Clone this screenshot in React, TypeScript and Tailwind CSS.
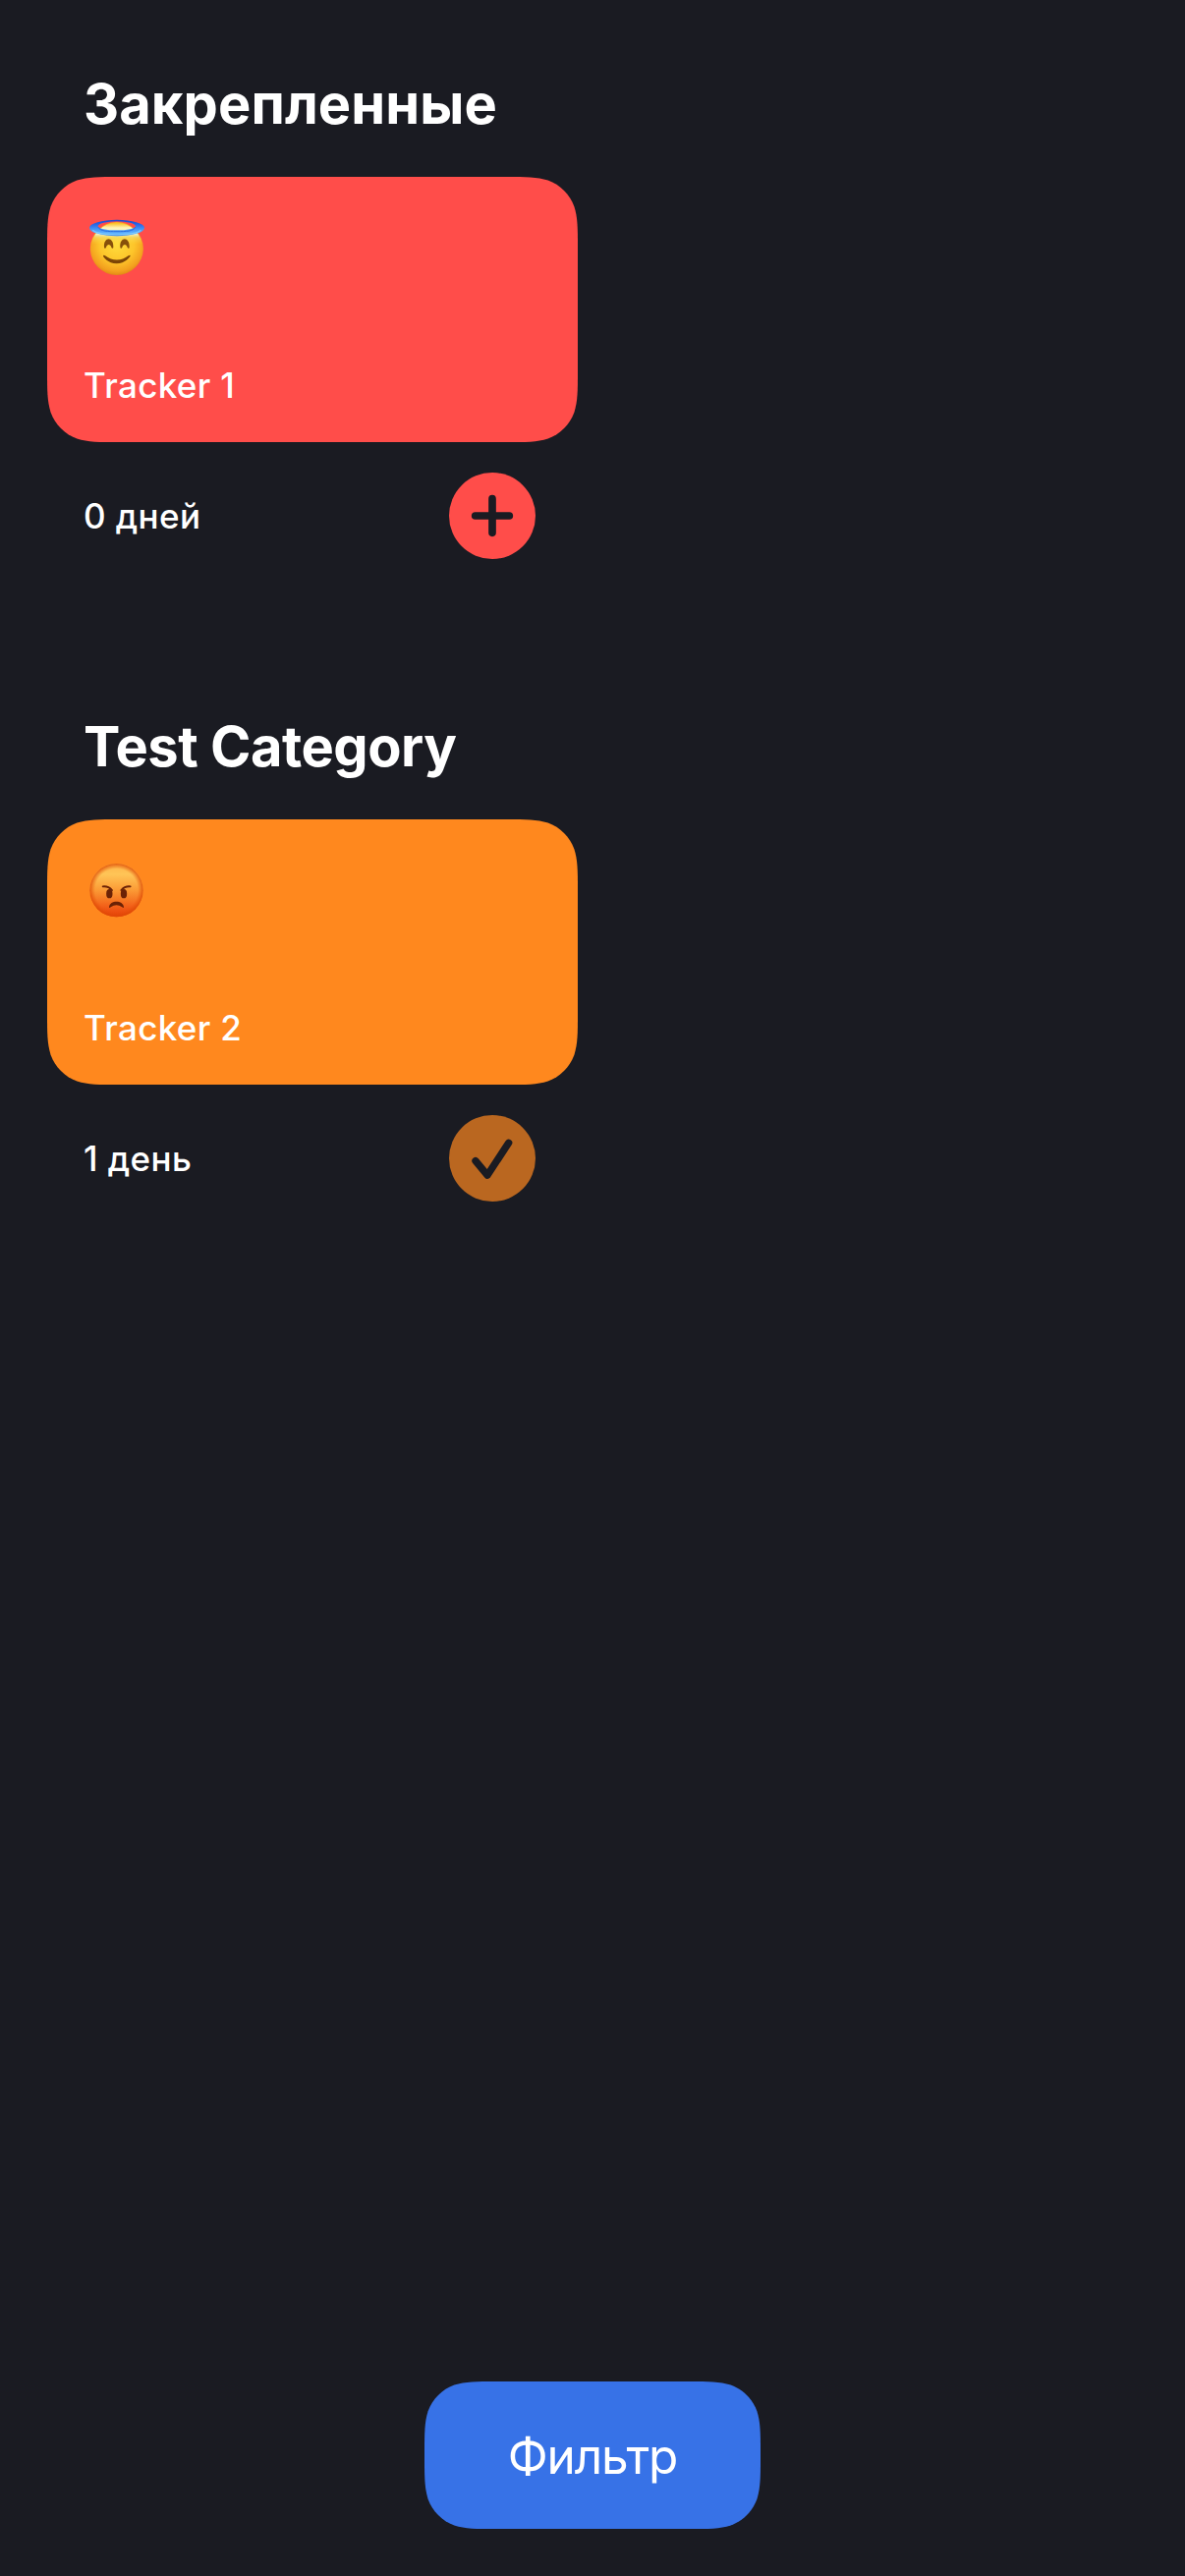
import type { ReactNode } from "react";

// Outline of a rectangle with continuous (smoothly eased) corners.
function smoothRect(w: number, h: number, r: number) {
  const a = 1.52866 * r;
  const b = 1.08849 * r;
  const c = 0.86841 * r;
  const d = 0.63149 * r;
  const e = 0.37282 * r;
  const f = 0.16906 * r;
  const g = 0.07491 * r;
  return (
    `path("M${a} 0 L${w - a} 0 C${w - b} 0 ${w - c} 0 ${w - d} ${g} C${w - e} ${f} ${w - f} ${e} ${w - g} ${d} C${w} ${c} ${w} ${b} ${w} ${a} ` +
    `L${w} ${h - a} C${w} ${h - b} ${w} ${h - c} ${w - g} ${h - d} C${w - f} ${h - e} ${w - e} ${h - f} ${w - d} ${h - g} C${w - c} ${h} ${w - b} ${h} ${w - a} ${h} ` +
    `L${a} ${h} C${b} ${h} ${c} ${h} ${d} ${h - g} C${e} ${h - f} ${f} ${h - e} ${g} ${h - d} C0 ${h - c} 0 ${h - b} 0 ${h - a} ` +
    `L0 ${a} C0 ${b} 0 ${c} ${g} ${d} C${f} ${e} ${e} ${f} ${d} ${g} C${c} 0 ${b} 0 ${a} 0 Z")`
  );
}

function HaloFace() {
  return (
    <svg viewBox="0 0 225 225" className="block size-[75px]" role="img" aria-label="Ангел">
      <defs>
        <radialGradient id="haloFace" cx="0.5" cy="0.42" r="0.6">
          <stop offset="0" stopColor="#ffdc3c" />
          <stop offset="0.55" stopColor="#fdc52a" />
          <stop offset="0.85" stopColor="#f3a01e" />
          <stop offset="1" stopColor="#dc8412" />
        </radialGradient>
        <linearGradient id="haloGlow" x1="0" y1="0" x2="0" y2="1">
          <stop offset="0" stopColor="#f9b914" />
          <stop offset="0.1" stopColor="#fff3b8" />
          <stop offset="0.22" stopColor="#e9eecb" />
          <stop offset="0.29" stopColor="#f5e37a" stopOpacity="0.5" />
          <stop offset="0.42" stopColor="#ffdf3c" stopOpacity="0" />
        </linearGradient>
        <linearGradient id="haloRing" x1="0" y1="0" x2="0" y2="1">
          <stop offset="0" stopColor="#1746cf" />
          <stop offset="0.3" stopColor="#2a6ae8" />
          <stop offset="0.62" stopColor="#4a9af8" />
          <stop offset="0.85" stopColor="#64b6ff" />
          <stop offset="1" stopColor="#3078e8" />
        </linearGradient>
      </defs>
      <circle cx="116.500" cy="114" r="81" fill="url(#haloFace)" />
      <circle cx="116.500" cy="114" r="79" fill="url(#haloGlow)" />
      <path
        fillRule="evenodd"
        fill="url(#haloRing)"
        d="M33 51a84 24.500 0 1 0 168 0a84 24.500 0 1 0-168 0M59 46a57.500 15.500 0 1 1 115 0a57.500 12 0 1 1-115 0"
      />
      <path d="M59 48c8 14 30 14 58 14s50 0 57-14" fill="none" stroke="#2b6fe0" strokeWidth="3" />
      <path d="M43 58c18 18 128 18 147 0" fill="none" stroke="#86d2ff" strokeWidth="4" opacity="0.7" />
      <path
        d="M78 110c-3-34 30-34 28 0c0 4-5 4-6 0c-3-11-13-11-16 0c-1 4-6 4-6 0zM127 110c-3-34 30-34 28 0c0 4-5 4-6 0c-3-11-13-11-16 0c-1 4-6 4-6 0z"
        fill="#87500a"
      />
      <path d="M75 136c1-3 4-2 6 0c22 17 50 17 71 0c3-2 6-3 6 0c0 4-16 24-42 24s-42-20-41-24z" fill="#7c4506" />
    </svg>
  );
}

function AngryFace() {
  return (
    <svg viewBox="0 0 225 225" className="block size-[75px]" role="img" aria-label="Злость">
      <defs>
        <linearGradient id="angryFace" x1="0" y1="0" x2="0" y2="1">
          <stop offset="0" stopColor="#fdb347" />
          <stop offset="0.2" stopColor="#ffc557" />
          <stop offset="0.5" stopColor="#fb9a35" />
          <stop offset="0.78" stopColor="#f3641a" />
          <stop offset="1" stopColor="#e63c08" />
        </linearGradient>
        <radialGradient id="angryEdge" cx="0.5" cy="0.5" r="0.5">
          <stop offset="0.8" stopColor="#e85408" stopOpacity="0" />
          <stop offset="1" stopColor="#dc4804" stopOpacity="0.8" />
        </radialGradient>
      </defs>
      <circle cx="115.500" cy="114.500" r="81.500" fill="url(#angryFace)" />
      <circle cx="115.500" cy="114.500" r="81.500" fill="url(#angryEdge)" />
      <g fill="#6b2206">
        <ellipse cx="94" cy="125" rx="9.500" ry="14" />
        <ellipse cx="138" cy="125" rx="9.500" ry="14" />
        <path d="M93 166c2-22 43-22 45 0c0 3-3 2-5 0c-12-8-23-8-35 0c-2 2-5 3-5 0z" />
      </g>
      <path
        d="M74 103c9-1 20 2 28 11M158 103c-9-1-20 2-28 11"
        fill="none"
        stroke="#6b2206"
        strokeWidth="5.500"
        strokeLinecap="round"
      />
    </svg>
  );
}

function PlusIcon() {
  return (
    <svg viewBox="0 0 264 264" className="size-full">
      <path d="M132 80v104M80 132h104" fill="none" stroke="#1a1b22" strokeWidth="23" strokeLinecap="round" />
    </svg>
  );
}

function CheckIcon() {
  return (
    <svg viewBox="0 0 264 264" className="size-full">
      <path
        d="M81 140L117 183.500L182 85"
        fill="none"
        stroke="#1a1b22"
        strokeWidth="22"
        strokeLinecap="round"
        strokeLinejoin="round"
      />
    </svg>
  );
}

interface TrackerProps {
  category: string;
  categoryClass: string;
  name: string;
  days: string;
  emoji: ReactNode;
  icon: ReactNode;
  cardClass: string;
  buttonClass: string;
}

function TrackerSection(p: TrackerProps) {
  return (
    <section className="flex h-[654px] w-[540px] flex-col">
      <h2 className={`flex h-[180px] items-center pt-[31px] pl-[37px] text-[56px] font-bold whitespace-nowrap ${p.categoryClass}`}>
        {p.category}
      </h2>
      <div
        className={`flex h-[270px] shrink-0 flex-col justify-between ${p.cardClass}`}
        style={{ clipPath: smoothRect(540, 270, 48) }}
      >
        <div className="pl-8">{p.emoji}</div>
        <p className="pb-9 pl-[37px] text-[35px] leading-[44px] font-medium tracking-[0.35px]">{p.name}</p>
      </div>
      <div className="mt-[31px] flex h-[88px] items-center justify-between pr-[43px] pl-[37px]">
        <span className="text-[35px] leading-[44px] font-medium tracking-[0.4px]">{p.days}</span>
        <button className={`size-[88px] rounded-full ${p.buttonClass}`}>{p.icon}</button>
      </div>
    </section>
  );
}

export default function App() {
  return (
    <main className="flex h-[2622px] w-[1206px] flex-col justify-between bg-[#1a1b22] px-12 pb-12 font-['Inter',sans-serif] text-white">
      <div>
        <TrackerSection
          category="Закрепленные"
          categoryClass="tracking-[0.1px]"
          name="Tracker 1"
          days="0 дней"
          emoji={<HaloFace />}
          icon={<PlusIcon />}
          cardClass="bg-[#ff4d4a] pt-[35px]"
          buttonClass="bg-[#ff4d4a]"
        />
        <TrackerSection
          category="Test Category"
          categoryClass="tracking-[-0.5px]"
          name="Tracker 2"
          days="1 день"
          emoji={<AngryFace />}
          icon={<CheckIcon />}
          cardClass="bg-[#ff881e] pt-[34px]"
          buttonClass="bg-[#ba6720]"
        />
      </div>
      <button
        className="flex h-[150px] w-[342px] items-center justify-center self-center bg-[#3772e7] pt-[2px] text-[49.5px] leading-[60px] tracking-[-1.2px]"
        style={{ clipPath: smoothRect(342, 150, 48) }}
      >
        Фильтр
      </button>
    </main>
  );
}
